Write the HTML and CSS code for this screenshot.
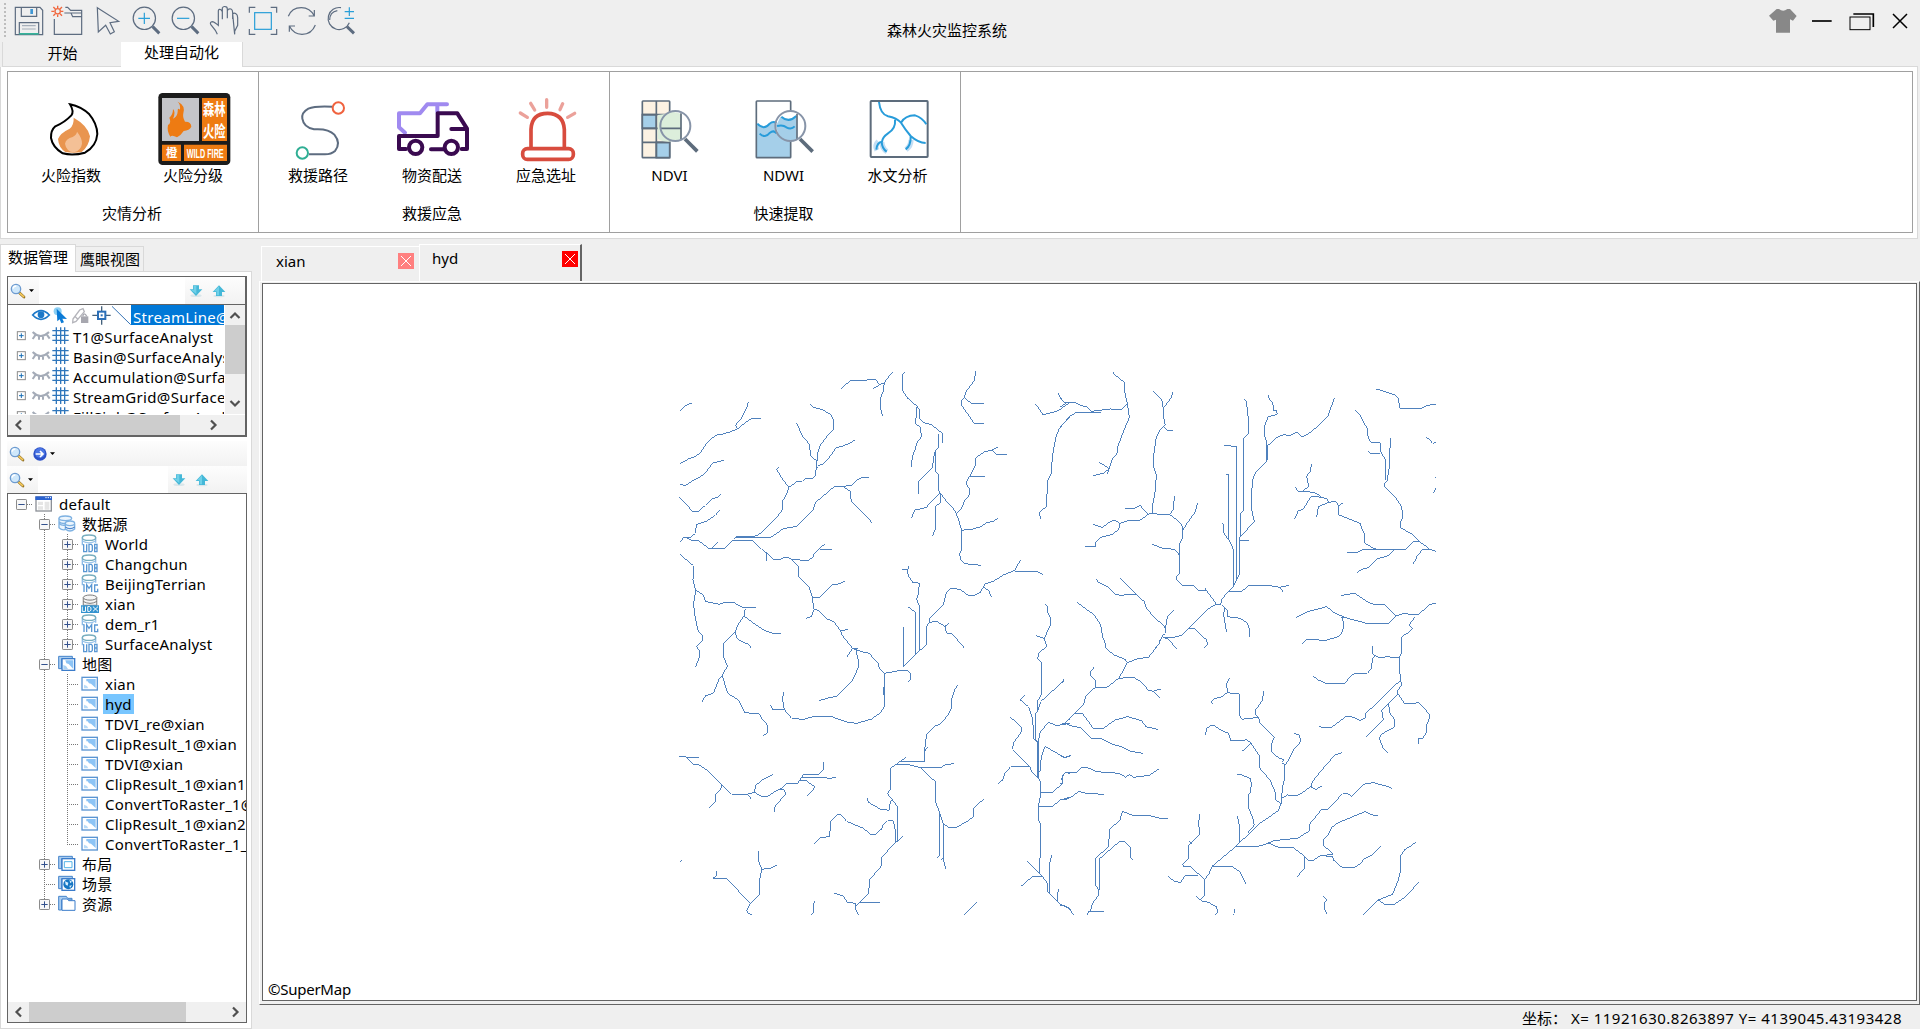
FILE: index.html
```html
<!DOCTYPE html>
<html lang="zh-CN">
<head>
<meta charset="utf-8">
<title>森林火灾监控系统</title>
<link rel="stylesheet" href="styles.css">
</head>
<body>
<svg class="defs" aria-hidden="true">
  <defs>
    <symbol id="search" viewBox="0 0 48 48"><path d="M28 29L42 42" stroke="#8a6a20" stroke-width="8" stroke-linecap="round"/><path d="M30 31L41 41" stroke="#f5c95c" stroke-width="5" stroke-linecap="round"/><circle cx="18" cy="18" r="14" fill="#cfe8fb" stroke="#6d9bd0" stroke-width="4"/><path d="M9 17a10 10 0 0 1 10-8" fill="none" stroke="#fff" stroke-width="4"/></symbol>
    <symbol id="down" viewBox="0 0 42 42"><ellipse cx="21" cy="35" rx="17" ry="4" fill="#d9e6ea"/><path d="M12 4H30V16H40L21 36L2 16H12Z" fill="#45b8d8"/><path d="M14 6H22V30L6 18H14Z" fill="#6fd0e8"/></symbol>
    <symbol id="up" viewBox="0 0 42 42"><ellipse cx="21" cy="36" rx="17" ry="4" fill="#d9e6ea"/><path d="M12 36H30V24H40L21 4L2 24H12Z" fill="#45b8d8"/><path d="M14 34H21V7L6 22H14Z" fill="#6fd0e8"/></symbol>
    <symbol id="caret" viewBox="0 0 15 9"><path d="M0 1H15L7.500 9Z" fill="#000"/></symbol>
    <symbol id="grid-layer" viewBox="45 255 165 60"><rect x="52" y="275" width="24" height="24" fill="#fff" stroke="#8d8d8d" stroke-width="3"/><path d="M57 287H71M64 280V294" stroke="#1b6fb5" stroke-width="3"/><path d="M98 276Q122 300 147 276M107 284L98 297M117 288V299M129 288V299M140 283L149 296" fill="none" stroke="#a5acb8" stroke-width="6"/><path d="M169 262V312M182 262V312M194 262V312M157 272H206M157 286H206M157 301H206" stroke="#2f76bb" stroke-width="4"/></symbol>
    <symbol id="plus" viewBox="0 0 33 33"><rect x="1.500" y="1.500" width="30" height="30" rx="2" fill="#f7f7f7" stroke="#8b8b8b" stroke-width="3"/><path d="M7 16.500H26M16.500 7V26" stroke="#32508c" stroke-width="3"/></symbol>
    <symbol id="minus" viewBox="0 0 33 33"><rect x="1.500" y="1.500" width="30" height="30" rx="2" fill="#f7f7f7" stroke="#8b8b8b" stroke-width="3"/><path d="M7 16.500H26" stroke="#32508c" stroke-width="3"/></symbol>
    <symbol id="workspace" viewBox="0 0 54 54"><rect x="3" y="6" width="46" height="42" fill="#fff" stroke="#8c9097" stroke-width="4"/><path d="M1 4H51V15H1Z" fill="#2b62d0"/><path d="M31 8H35M38 8H42M45 8H48" stroke="#fff" stroke-width="3"/><path d="M9 20H24V30H9ZM9 34H24V44H9ZM29 20H43V44H29Z" fill="#e5e5e5"/></symbol>
    <symbol id="sources" viewBox="0 0 54 54"><g fill="#eef6fd" stroke="#7fb2e2" stroke-width="4"><path d="M3 10V38Q14 49 26 42M3 10V20Q16 30 29 22M3 25Q12 34 24 30"/><ellipse cx="22" cy="10" rx="19" ry="7"/><path d="M22 27V42Q36 54 50 42V27"/><ellipse cx="36" cy="25" rx="14" ry="7"/><path d="M22 36Q36 46 50 36" stroke="#4f86cc"/></g></symbol>
    <symbol id="drum" viewBox="0 0 54 60"><path d="M4 10V32H9M44 10V26" fill="none" stroke="#8bbbe6" stroke-width="4"/><ellipse cx="24" cy="11" rx="20" ry="8" fill="#fff" stroke="#78aebf" stroke-width="4"/><path d="M4 21Q24 32 44 21" fill="none" stroke="#9ac4ea" stroke-width="4"/></symbol>
    <symbol id="udb" viewBox="0 0 54 60"><use href="#drum" width="54" height="60"/><path d="M8 31V53H17V31M24 31H31L34 35V49L31 53H24ZM41 31H48V53H41ZM41 42H48" fill="none" stroke="#5a97d3" stroke-width="4"/></symbol>
    <symbol id="img" viewBox="0 0 54 60"><use href="#drum" width="54" height="60"/><path d="M9 31V54M17 54V32L24 43L32 32V54M51 33H41V53H50V44" fill="none" stroke="#5a97d3" stroke-width="4"/></symbol>
    <symbol id="udx" viewBox="2 0 56 60"><g fill="#f5f5f5" stroke="#777" stroke-width="3"><path d="M9 10V34H51V10"/><ellipse cx="30" cy="10" rx="21" ry="8"/><path d="M9 22Q30 34 51 22" fill="none"/></g><rect y="34" width="60" height="24" fill="#3292cf"/><path d="M6 38V53H16V38M23 38H29L33 42V49L29 53H23ZM39 38L55 53M55 38L39 53" fill="none" stroke="#fff" stroke-width="3"/></symbol>
    <symbol id="map" viewBox="0 0 54 48"><rect x="3" y="4" width="46" height="38" fill="#fff" stroke="#5b95d2" stroke-width="4"/><path d="M16 9H44V36L30 23L24 22L20 16H16Z" fill="#8dc4f5"/><path d="M9 26L18 30L22 37H9Z" fill="#b8dbf8"/></symbol>
    <symbol id="stack" viewBox="0 0 54 54"><path d="M2 4H43V12H11V41H2Z" fill="#a9cdf1" stroke="#4584ca" stroke-width="3"/><rect x="12" y="11" width="38" height="35" fill="#fff" stroke="#3b7cca" stroke-width="4"/></symbol>
    <symbol id="maps" viewBox="0 0 54 54"><use href="#stack" width="54" height="54"/><path d="M22 16H46V42L32 27L25 25Z" fill="#8dc4f5"/><path d="M16 30L24 33L30 42H16Z" fill="#a9d2f5"/></symbol>
    <symbol id="layout" viewBox="0 0 54 54"><use href="#stack" width="54" height="54"/><path d="M19 20H42V38H19Z" fill="none" stroke="#53b4e8" stroke-width="3"/></symbol>
    <symbol id="scene" viewBox="0 0 54 54"><use href="#stack" width="54" height="54"/><circle cx="31" cy="28" r="15" fill="#1676c3"/><path d="M21 19L31 23L29 32L23 29ZM34 15L42 20L37 25ZM34 32L42 31L36 39Z" fill="#d8efff"/></symbol>
    <symbol id="folder" viewBox="0 0 54 54"><path d="M2 4H25L29 10H42V15H11V45H2Z" fill="#a9cdf1" stroke="#4584ca" stroke-width="3"/><path d="M12 12H28L32 17H51V46H12Z" fill="#fff" stroke="#3b7cca" stroke-width="3"/></symbol>
  </defs>
</svg>

<div class="window">
  <header class="titlebar">
    <div class="quick">
      <span class="grip"></span>
      <svg class="q" viewBox="36 9 117 99"><path d="M46 22H120L128 31V104H46ZM64 22V49H110V22M58 104V68H116V104" /><rect x="91" y="27" width="8" height="15" fill="#3f97d4" stroke="none"/><path d="M66 77H107M66 87H107" stroke="#a6afba"/><path d="M58 101.500H116" stroke="#36b39a" stroke-width="5"/></svg>
      <svg class="q" viewBox="153 9 117 99"><path d="M163 57V103H245V31H212L203 22H196M193 39H213L218 50H245M203 39H245"/><g stroke="#f0683f" stroke-width="4"><circle cx="173" cy="34" r="8"/><path d="M173 17V24M173 44V51M154 34H163M183 34H190M160 21L166 27M186 21L180 27M160 47L166 41M186 47L180 41"/></g></svg>
      <svg class="q" viewBox="270 9 117 99"><path d="M292 23L356 64L330 68L343 95L331 102L317 76L295 96Z"/></svg>
      <svg class="q" viewBox="387 9 117 99"><circle cx="433" cy="55" r="33.500"/><path class="cyan" d="M415 55H450M433 38V72"/><path d="M458 80L478 100" stroke-width="9"/></svg>
      <svg class="q" viewBox="504 9 117 99"><circle cx="550" cy="55" r="33.500"/><path class="cyan" d="M531 55H568"/><path d="M575 80L595 100" stroke-width="9"/></svg>
      <svg class="q" viewBox="621 9 117 99"><path d="M652 103L646 91L632 73Q629 66 637 65Q642 65 655 76V32Q657 26 663 29L667 35V57M667 58V24Q670 18 676 20Q682 20 682 28V55M682 32Q685 25 693 27Q698 29 698 38V57M698 42Q702 37 708 41Q713 44 713 53V76L704 94V103Z"/></svg>
      <svg class="q" viewBox="738 9 117 99"><path d="M748 38V22H766M812 22H830V38M748 87V103H766M812 103H830V87"/><rect class="cyan" x="764" y="38" width="50" height="50"/></svg>
      <svg class="q" viewBox="855 9 117 99"><path d="M865 49Q875 23 904 23Q930 23 943 48M943 30V48H926M946 75Q935 103 906 103Q880 102 868 78M868 95V78H885"/></svg>
      <svg class="q" viewBox="972 9 117 99"><path d="M1023 23A33 33 0 1 0 1048 68M1012 32Q989 36 989 60" /><path class="cyan" d="M1034 35H1062M1048 22V48M1034 55H1062"/><path d="M1041 80L1062 100" stroke-width="9"/></svg>
    </div>
    <h1>森林火灾监控系统</h1>
    <div class="controls">
      <svg class="shirt" viewBox="861 18 96 90"><path d="M890 27H897Q909 38 922 27H930L950 48L939 62L930 58V98H888V59L880 62L867 47Z" fill="#888"/></svg>
      <svg class="min" viewBox="990 18 72 90"><path d="M996 63H1055" stroke="#000" stroke-width="5"/></svg>
      <svg class="restore" viewBox="1101 18 90 90"><path d="M1120 42H1180V81" fill="none" stroke="#000" stroke-width="5"/><rect x="1110" y="51" width="60" height="38" fill="none" stroke="#000" stroke-width="3"/></svg>
      <svg class="close" viewBox="1230 18 60 90"><path d="M1239 42L1281 84M1281 42L1239 84" stroke="#000" stroke-width="4.500"/></svg>
    </div>
  </header>

  <nav class="ribbon-tabs"><span class="rtab">开始</span><span class="rtab active">处理自动化</span><span class="rest"></span></nav>
  <section class="ribbon">
    <div class="ribbon-inner">
      <div class="group g1">
        <div class="items">
          <div class="item"><svg viewBox="93 75 240 228"><path d="M210 115Q223 137 214 148Q194 169 166 181Q152 193 153 216Q158 244 188 262Q218 270 255 260Q289 241 292 204Q291 172 268 145Q244 122 210 115Z" fill="#fff" stroke="#000" stroke-width="6"/><path d="M221 155Q264 179 270 211Q267 241 245 258Q222 263 196 258Q176 245 174 219Q181 201 209 188Q222 178 221 155Z" fill="#e9954f"/><path d="M231 197Q247 217 246 233Q243 253 222 259Q199 257 195 233Q198 218 218 213Q231 205 231 197Z" fill="#f4c096"/></svg><span>火险指数</span></div>
          <div class="item"><svg viewBox="459 75 240 228"><rect x="475" y="81" width="216" height="216" rx="13" fill="#1c1c1c"/><path d="M486 96H597V225H486Z" fill="#c4c5c9"/><path d="M606 96H681V225H606ZM486 236H543V285H486ZM552 236H681V285H552Z" fill="#ee7b12"/><path d="M533 107Q557 118 550 142Q547 154 555 167Q573 166 574 182Q568 193 551 195Q542 209 531 214Q516 206 511 212Q500 195 504 177Q515 171 508 155Q519 146 519 129Q528 139 519 158Q532 152 533 137Q532 123 540 131Q542 115 533 107Z" fill="#ee7b12"/><g class="plate"><text x="0" y="0" font-size="35" transform="translate(609 148) scale(.97 1.4)">森林</text><text x="0" y="0" font-size="35" transform="translate(609 214) scale(.97 1.4)">火险</text><text x="498" y="274" font-size="34">橙</text><text x="0" y="0" font-size="34" transform="translate(560 276) scale(.64 1.16)" class="wild">WILD FIRE</text></g></svg><span>火险分级</span></div>
        </div>
        <div class="caption">灾情分析</div>
      </div>
      <div class="group g2">
        <div class="items">
          <div class="item"><svg viewBox="834 75 240 228"><path d="M998 122Q945 119 925 128Q904 140 907 158Q911 184 942 190Q985 187 1003 206Q1024 232 1005 255Q994 265 975 265H927" fill="none" stroke="#5d6c80" stroke-width="6"/><circle cx="1015" cy="126" r="17" fill="#fff" stroke="#f0623e" stroke-width="6"/><circle cx="907" cy="261" r="17" fill="#fff" stroke="#2fae94" stroke-width="6"/></svg><span>救援路径</span></div>
          <div class="item"><svg viewBox="1176 75 240 228"><g fill="none" stroke-width="12" stroke-linecap="round" stroke-linejoin="round"><path d="M1215 200L1197 184V142H1260L1282 115H1341M1312 115V138" stroke="#a08af0"/><path d="M1218 249H1197V210H1313V142H1372L1401 188V249H1385M1354 189H1400M1293 250H1330" stroke="#3a0a50"/><g stroke="#3a0a50" fill="#fff"><circle cx="1247" cy="244" r="20"/><circle cx="1354" cy="244" r="20"/></g></g></svg><span>物资配送</span></div>
          <div class="item"><svg viewBox="81 75 240 228"><g fill="none" stroke-linecap="round" stroke-linejoin="round"><path d="M203 101V124M155 112L167 132M251 113L243 131M124 141L145 154M287 142L266 154" stroke="#eba19a" stroke-width="10"/><path d="M156 248V190Q158 142 206 142Q253 143 256 190V248" stroke="#d84c3e" stroke-width="11"/><rect x="131" y="248" width="152" height="32" rx="14" fill="#fff" stroke="#d84c3e" stroke-width="11"/></g></svg><span>应急选址</span></div>
        </div>
        <div class="caption">救援应急</div>
      </div>
      <div class="group g3">
        <div class="items">
          <div class="item"><svg viewBox="449 75 240 228"><g stroke="#5d6c7c" stroke-width="5"><rect x="486" y="105" width="82" height="170" rx="2" fill="#fcf2e3"/><path d="M486 146H528V187H486ZM528 229H568V275H528Z" fill="#a5cfe9"/><path d="M528 105V275M486 146H568M486 187H568M486 229H568" fill="none"/></g><circle cx="585" cy="180" r="45" fill="#fff"/><path d="M532 147L555 144Q575 132 603 144V219Q560 236 532 219Z" fill="#dceedb"/><path d="M540 187H602M602 142V220" stroke="#5d6c7c" stroke-width="5"/><circle cx="585" cy="180" r="45" fill="none" stroke="#8794a8" stroke-width="6"/><path d="M614 219L651 256" stroke="#5d6c7c" stroke-width="11"/></svg><span>NDVI</span></div>
          <div class="item"><svg viewBox="791 75 240 228"><path d="M828 173Q850 191 865 173Q885 166 895 172H930V273H828Z" fill="#a5cfe9"/><rect x="828" y="105" width="103" height="170" rx="2" fill="none" stroke="#5d6c7c" stroke-width="5"/><circle cx="930" cy="180" r="45" fill="#fff"/><path d="M887 180L900 153Q925 170 949 153V219Q920 233 895 209Z" fill="#a5cfe9"/><path d="M831 173Q851 194 868 173Q878 164 888 171M838 203Q854 219 869 200Q880 191 889 202M903 152Q925 172 948 150M890 180Q908 175 918 184Q933 192 943 181" fill="none" stroke="#289cda" stroke-width="6"/><path d="M950 144V219" stroke="#5d6c7c" stroke-width="5"/><circle cx="930" cy="180" r="45" fill="none" stroke="#8794a8" stroke-width="6"/><path d="M959 219L997 257" stroke="#5d6c7c" stroke-width="11"/></svg><span>NDWI</span></div>
          <div class="item"><svg viewBox="1135 75 240 228"><rect x="1173" y="105" width="171" height="168" rx="2" fill="#fff" stroke="#5d6c7c" stroke-width="6"/><g fill="none"><path d="M1196 226Q1184 238 1192 253M1206 228Q1208 249 1222 257M1294 221Q1294 240 1279 251" stroke="#c3def4" stroke-width="16"/><path d="M1198 108Q1202 145 1225 151Q1251 156 1264 170Q1275 188 1293 210Q1315 230 1338 231M1246 161Q1249 188 1225 202Q1209 213 1207 227Q1192 228 1190 251M1206 227Q1207 248 1221 257M1264 170Q1276 149 1306 148Q1328 155 1340 175M1293 210Q1294 239 1278 250" stroke="#289cda" stroke-width="6"/></g></svg><span>水文分析</span></div>
        </div>
        <div class="caption">快速提取</div>
      </div>
    </div>
  </section>

  <main class="body">
    <aside class="side">
      <div class="side-tabs"><span class="stab active">数据管理</span><span class="stab">鹰眼视图</span><span class="rest"></span></div>
      <div class="side-page">
        <div class="layers">
          <div class="finder"><svg class="s16"><use href="#search"/></svg><svg class="caret"><use href="#caret"/></svg><span class="field"></span><svg class="s14"><use href="#down"/></svg><svg class="s14"><use href="#up"/></svg></div>
          <div class="layer-view">
            <div class="layer-rows">
              <div class="lrow first"><svg class="line-tools" viewBox="93 195 300 60"><path d="M98 225Q123 199 148 225Q123 251 98 225Z" fill="#fff" stroke="#1b78c8" stroke-width="5"/><circle cx="123" cy="224" r="10" fill="#1b78c8"/><circle cx="173" cy="214" r="12" fill="#8dd0f4"/><path d="M170 206L201 237L187 236L192 247L184 250L179 238L172 244Z" fill="#0b7bd6"/><path d="M219 237L239 210L249 206L253 215L228 244L218 248ZM226 230L235 239" fill="none" stroke="#b5b5bb" stroke-width="4"/><rect x="243" y="229" width="22" height="20" fill="#a7a7af"/><path d="M248 229Q253 214 260 229M254 235V243" fill="none" stroke="#a7a7af" stroke-width="4"/><path d="M277 226H332M305 199V254" stroke="#44617c" stroke-width="4"/><rect x="294" y="215" width="22" height="22" fill="#fff" stroke="#2b6fb8" stroke-width="6"/><rect x="302" y="223" width="6" height="6" fill="#2b6fb8"/><path d="M336 199L392 254" stroke="#3573b5" stroke-width="3"/></svg><span class="sel">StreamLine@SurfaceAnalyst</span></div>
              <div class="lrow"><svg class="lico"><use href="#grid-layer"/></svg><span>T1@SurfaceAnalyst</span></div>
              <div class="lrow"><svg class="lico"><use href="#grid-layer"/></svg><span>Basin@SurfaceAnalyst</span></div>
              <div class="lrow"><svg class="lico"><use href="#grid-layer"/></svg><span>Accumulation@SurfaceAnalyst</span></div>
              <div class="lrow"><svg class="lico"><use href="#grid-layer"/></svg><span>StreamGrid@SurfaceAnalyst</span></div>
              <div class="lrow"><svg class="lico"><use href="#grid-layer"/></svg><span>FillSink@SurfaceAnalyst</span></div>
            </div>
            <div class="vbar"><svg viewBox="0 0 20 20"><path d="M5.500 13L10 8.500L14.500 13"/></svg><span class="thumb"></span><span class="grow"></span><svg viewBox="0 0 20 20"><path d="M5.500 7L10 11.500L14.500 7"/></svg></div>
          </div>
          <div class="hbar top-h"><svg viewBox="0 0 20 20"><path d="M13 5.500L8.500 10L13 14.500"/></svg><span class="thumb"></span><span class="grow"></span><svg viewBox="0 0 20 20"><path d="M8 5.500L12.500 10L8 14.500"/></svg></div>
        </div>
        <div class="strip"><svg class="s16"><use href="#search"/></svg><svg class="go" viewBox="0 0 42 42"><circle cx="21" cy="21" r="20" fill="#2c51c8"/><circle cx="21" cy="18" r="15" fill="#4c76e4"/><path d="M8 21H29M21 12L30 21L21 30" fill="none" stroke="#fff" stroke-width="5"/></svg><svg class="caret"><use href="#caret"/></svg></div>
        <div class="finder second"><svg class="s16"><use href="#search"/></svg><svg class="caret"><use href="#caret"/></svg><span class="field"></span><svg class="s14"><use href="#down"/></svg><svg class="s14"><use href="#up"/></svg></div>
        <div class="tree">
          <div class="tree-rows">
            <div class="trow"><i class="c h"><svg><use href="#minus"/></svg></i><svg class="ti"><use href="#workspace"/></svg><span>default</span></div>
            <div class="trow"><i class="c"></i><i class="c t"><svg><use href="#minus"/></svg></i><svg class="ti"><use href="#sources"/></svg><span>数据源</span></div>
            <div class="trow"><i class="c"></i><i class="c v"></i><i class="c t"><svg><use href="#plus"/></svg></i><svg class="ti"><use href="#udb"/></svg><span>World</span></div>
            <div class="trow"><i class="c"></i><i class="c v"></i><i class="c t"><svg><use href="#plus"/></svg></i><svg class="ti"><use href="#udb"/></svg><span>Changchun</span></div>
            <div class="trow"><i class="c"></i><i class="c v"></i><i class="c t"><svg><use href="#plus"/></svg></i><svg class="ti"><use href="#img"/></svg><span>BeijingTerrian</span></div>
            <div class="trow"><i class="c"></i><i class="c v"></i><i class="c t"><svg><use href="#plus"/></svg></i><svg class="ti"><use href="#udx"/></svg><span>xian</span></div>
            <div class="trow"><i class="c"></i><i class="c v"></i><i class="c t"><svg><use href="#plus"/></svg></i><svg class="ti"><use href="#img"/></svg><span>dem_r1</span></div>
            <div class="trow"><i class="c"></i><i class="c v"></i><i class="c l"><svg><use href="#plus"/></svg></i><svg class="ti"><use href="#udb"/></svg><span>SurfaceAnalyst</span></div>
            <div class="trow"><i class="c"></i><i class="c t"><svg><use href="#minus"/></svg></i><svg class="ti"><use href="#maps"/></svg><span>地图</span></div>
            <div class="trow"><i class="c"></i><i class="c v"></i><i class="c t"></i><svg class="ti"><use href="#map"/></svg><span>xian</span></div>
            <div class="trow"><i class="c"></i><i class="c v"></i><i class="c t"></i><svg class="ti"><use href="#map"/></svg><span class="picked">hyd</span></div>
            <div class="trow"><i class="c"></i><i class="c v"></i><i class="c t"></i><svg class="ti"><use href="#map"/></svg><span>TDVI_re@xian</span></div>
            <div class="trow"><i class="c"></i><i class="c v"></i><i class="c t"></i><svg class="ti"><use href="#map"/></svg><span>ClipResult_1@xian</span></div>
            <div class="trow"><i class="c"></i><i class="c v"></i><i class="c t"></i><svg class="ti"><use href="#map"/></svg><span>TDVI@xian</span></div>
            <div class="trow"><i class="c"></i><i class="c v"></i><i class="c t"></i><svg class="ti"><use href="#map"/></svg><span>ClipResult_1@xian1</span></div>
            <div class="trow"><i class="c"></i><i class="c v"></i><i class="c t"></i><svg class="ti"><use href="#map"/></svg><span>ConvertToRaster_1@xian</span></div>
            <div class="trow"><i class="c"></i><i class="c v"></i><i class="c t"></i><svg class="ti"><use href="#map"/></svg><span>ClipResult_1@xian2</span></div>
            <div class="trow"><i class="c"></i><i class="c v"></i><i class="c l"></i><svg class="ti"><use href="#map"/></svg><span>ConvertToRaster_1_1@xian</span></div>
            <div class="trow"><i class="c"></i><i class="c t"><svg><use href="#plus"/></svg></i><svg class="ti"><use href="#layout"/></svg><span>布局</span></div>
            <div class="trow"><i class="c"></i><i class="c t"></i><svg class="ti"><use href="#scene"/></svg><span>场景</span></div>
            <div class="trow"><i class="c"></i><i class="c l"><svg><use href="#plus"/></svg></i><svg class="ti"><use href="#folder"/></svg><span>资源</span></div>
          </div>
          <div class="hbar tree-h"><svg viewBox="0 0 20 20"><path d="M13 5.500L8.500 10L13 14.500"/></svg><span class="thumb"></span><span class="grow"></span><svg viewBox="0 0 20 20"><path d="M8 5.500L12.500 10L8 14.500"/></svg></div>
        </div>
      </div>
    </aside>

    <section class="work">
      <div class="doc-tabs">
        <div class="dtab"><span>xian</span><svg class="x" viewBox="0 0 16 16"><path d="M3 3L13 13M13 3L3 13"/></svg></div>
        <div class="dtab active"><span>hyd</span><svg class="x" viewBox="0 0 16 16"><path d="M3 3L13 13M13 3L3 13"/></svg></div>
      </div>
      <div class="frame">
        <div class="map">
          <svg class="streams" viewBox="263 284 1652 716">
            <g transform="translate(670 360) scale(.33333)">
              <path d="M31 152L45 138 65 129M235 127L229 146 215 174 197 195 202 206M272 175L247 175 225 188 208 204 185 214 160 222 142 224 122 237 103 259 91 279 76 289 55 297 31 311M163 301L128 309 106 339 85 354 70 361 48 376 31 374M155 401L145 411 124 418 106 436 85 454 67 454 55 440 28 412M149 451L136 466 109 484 79 494 76 520 64 531 40 533 31 546M49 532L61 540 85 542 100 552 115 565 163 566 189 541 248 541 275 568 290 579 310 598 335 597 340 592 355 593 365 599 416 601 430 590 433 580 448 567 485 568M450 565L464 552M290 577L288 604M125 565L143 547"/>
              <path d="M190 538L199 529 258 528 275 517 325 466 337 450 338 423 350 401 357 382 379 366 397 364 404 357 428 356 436 347 436 333 443 320M357 382L340 361 330 345 320 329 326 322M199 532H302L325 517 340 506 380 499 404 476 430 448 437 427 494 379 518 379 545 376 562 360 577 352 596 352M518 379L540 393 544 424 580 460 608 490M421 133L430 142 455 148 482 163 491 180 491 207 470 230 452 254 443 278 441 304M379 189L386 200 388 210 398 230 418 252 422 287 441 304V325M443 317L460 312 482 287 497 264 520 258 539 249 554 241"/>
              <path d="M513 86L541 62 582 61 617 57 628 75 610 86M628 75L643 68 658 48 671 35M643 68L640 93 633 110 633 150 638 169M704 36L698 45V93L712 114 740 138 748 148 749 175 760 187 785 195 812 216 817 219V250M740 140L737 192 750 200 755 230 742 245 735 270 727 290 724 320M806 222L805 262 796 273V333L806 345V393L812 400 830 425 850 445 859 461 868 487 875 511M794 275L787 322 745 364V403M809 399L768 443 735 450 724 474M812 400L811 428 796 440V508L787 529"/>
              <path d="M917 34L913 62 886 98 884 113 873 124 874 135 900 172 914 192 941 191M884 113L902 129 941 132M983 262L967 270 945 275 918 293 915 318 905 338 898 350 890 365 891 375 898 387 897 406 884 422 875 445 859 461M967 270L980 284 1010 283M900 349H944M875 511L909 507 930 501 950 488 970 484 983 475M875 511L875 570 869 582 873 600 885 611 932 616M1097 133L1110 150 1119 165 1165 152 1184 138 1200 127M1165 99L1168 110 1184 127 1200 127M1200 171L1168 205 1158 230 1152 262 1147 290 1144 340 1133 362 1129 440 1110 455 1108 465 1114 478"/>
              <path d="M31 583L55 605 70 617 69 660 77 692 71 730 73 760 85 815 97 826 97 841 80 860 88 872 88 890 77 922M79 692L100 705 106 724 148 733 160 728 190 727 222 744H257M226 746L222 768 205 793 195 816 160 850M222 768L260 796 285 812 310 820 332 821M195 816L203 838 235 853 245 865M365 599L386 620V650L418 683 427 712H449L485 675 505 672 524 664M427 712L431 748 445 751 470 777 490 784 512 812 516 825 548 865M431 751L425 769 409 775M512 812L533 809"/>
              <path d="M697 628H715V619M712 628L715 648 727 666 748 670 745 700 740 718 748 738V873M715 741L737 757V884M700 801V920M1052 599L1034 631 1000 645 970 664 945 672 940 682 930 698 912 706 895 706 870 688 842 685 830 696 820 733 778 775 778 787 770 798V853L748 873 700 920M1034 635L1100 634 1118 643M940 682L955 690 965 712M778 787L800 784 825 799 838 788M825 799L830 820 847 822 884 865M1127 733L1132 740 1133 757 1143 775 1140 798 1123 835 1130 858M1123 835L1097 827"/>
            </g>
            <g transform="translate(1060 360) scale(.33333)">
              <path d="M157 35L165 45 193 67 194 95 202 130 208 172 186 225 173 262 174 277 157 297 148 325 142 343M118 307L148 326 130 340 100 347M0 115L12 127H46L63 137 80 140 95 154 150 147 185 148 202 132M0 142L18 130M0 202L30 168 50 157H122M280 94L305 118 310 145M338 97L334 112 310 145V170L316 195 301 208 289 232 281 285 282 325 289 345 286 390 279 430 278 460M312 202L325 212H338"/>
              <path d="M195 445H222L240 436 265 463 278 459 305 465 328 463 340 450 343 409M328 463L355 483 368 500V535L358 552V640L350 650V660L368 676H400L418 693H440L467 728V733H482L485 718 505 694 521 678V570L505 535V343H499M265 463L240 481 205 482 180 490 165 481 152 484 127 502 100 493M180 490L176 508 158 523 120 533 108 545 107 560 75 559M413 428L405 457 381 490 368 512M275 553L310 565 343 568 358 585M437 683V693M489 490L491 517 504 538"/>
              <path d="M493 256L522 259H529V660M553 118L559 125 565 177V220L550 237V452L541 462V525L538 545V642L521 678M541 530L583 485 574 445V400L580 350 590 333 620 303V245L613 227V200L625 170 652 163 650 153 642 152 638 130 627 115V105M622 300V258L650 233 670 224 690 227 710 217 728 231 755 215 803 170 823 115M541 541H566M505 694H545L568 676H625L660 682 686 676M660 682L670 696M467 733L440 750 387 803 363 827 330 834H316M387 805H402L440 840 442 853 433 865M494 740L491 765 500 817M488 736L502 752V770L540 775 560 787 568 805V832"/>
              <path d="M109 658L115 667 145 682 165 702 190 708 195 703H228M181 655L228 703 252 724 260 745 285 775 310 795 316 806V820L305 830 298 850 283 868M340 751L322 770 316 806M305 830L325 838 350 866M52 727L75 745 103 765 122 795 128 830 136 850 137 862 143 868M949 87L975 95 1005 105 1015 115 1019 145H1085L1100 136 1128 133M886 152L900 165 921 205 925 235 935 249 961 248V274L977 300V360M925 275L932 281 961 280M991 235L988 320 981 362 973 370 975 380 1005 410 1025 440 1028 470 1021 490 1022 503 1055 522 1078 545 1100 560 1108 568M1097 232L1108 238 1118 250 1128 247M1126 352H1129M1128 385L1120 398"/>
              <path d="M755 313L750 335 740 348 746 378 730 393M706 382L715 394H740L770 400 785 412 803 418 805 428 825 423 835 435 837 465 870 478 900 490 905 505 913 520V548L940 565 950 568H1037L1060 545H1078M785 412L755 408 740 430 730 448 715 452 703 478M805 428L775 440 770 472M850 428L837 437M862 577H893L910 568H950M1003 570L985 587 950 597 925 623 905 628 892 637M1128 575L1115 569H1087L1070 590 1066 603 1058 612M844 706L885 700 925 727 940 733 973 734 1008 768 987 790H920L862 775 825 760 800 740 740 756 709 772M1008 768L1030 761 1075 764 1110 733 1128 730M845 772L851 790 848 815 835 830 797 841 740 838 727 851M845 772H862M1066 770L1047 795 1057 805 1045 818 1025 830V870"/>
            </g>
            <g transform="translate(670 640) scale(.33333)">
              <path d="M548 25L575 35 597 40 625 70 628 85 643 100 693 91M548 25H565M548 25L530 52M557 27L565 60 564 85 548 120 502 168 470 175 448 182M693 91L712 91 721 100 720 120 715 125M643 100V200L632 218 605 237 560 250 530 246 485 230 430 230 400 238 365 235 343 209H308L301 194M343 209L338 180 340 156M640 140V164M161 10V50L172 78 157 107 147 118 130 160 106 168 97 185M157 107L173 160 205 180 225 218 268 222 275 235 293 256 291 280 280 286"/>
              <path d="M863 136L855 147 844 180 843 208 832 228 810 253 795 258 770 282 765 320 764 364H691L662 385V445L653 462 683 500V603M775 320L765 332M707 352L691 365M680 374H715L752 383H815L825 374 853 371M752 384L797 426 798 490 809 518V647L802 653M797 450V485M809 520L820 552V658L827 686M820 550L835 562H858L895 543 911 528V504L925 490 943 478M820 655L813 658M668 478L661 485 657 511 630 507 595 487 592 475M431 613L450 593 479 590 482 543 502 523 511 523 530 544 580 565 602 583H616L635 567 638 557 653 542H670L677 575V608M698 590L677 608 636 650 634 678 600 718 595 762 557 798 558 810 566 824M493 760L520 768 532 787 557 790V798M568 787H630M883 824L920 787M31 664L35 661"/>
              <path d="M128 716L138 708 139 694M128 716H170L241 790 269 762V718L275 688 265 660V634M275 688L300 685 320 676M241 790L230 812 234 820 245 824M433 782L430 800 431 818 424 824M28 349H45L70 372 87 375 115 393 185 463H232L245 478M48 352H88M155 434L152 448 137 464 136 485 118 502M232 463L253 457 275 469H292L315 455 335 445 350 431H382L400 404H445L460 390V366M253 457L258 435 280 418 308 404M397 413H470L477 417 497 411M388 421H407L434 440 430 448 412 467M330 448L343 450 347 462 313 502 315 517"/>
              <path d="M1130 18L1105 42 1103 58 1114 65V165L1103 182V212L1097 220V300L1103 306V414M1180 120L1175 128 1112 185 1103 212M1063 166L1051 180 1075 200 1088 235 1091 297 1103 306M1019 229L1054 262 1053 277 1030 310 1028 328 1080 380 1085 395 1104 414 1112 425V465L1106 495V543L1111 550V610L1109 700 1118 710 1132 730 1134 755 1170 792 1200 805M1078 380H1022L1005 400 998 420 985 431M1106 414V310L1108 280 1135 247 1160 257 1200 250M1183 250L1200 236M1110 395L1114 350 1125 320 1150 333 1180 352 1200 350M1112 457H1148L1178 430 1175 415 1185 398 1200 400M1106 499H1148L1170 480 1200 472M1073 664L1109 700M1118 709H1088L1052 740M1145 645L1139 670V763M1167 748L1163 760V787"/>
            </g>
            <g transform="translate(1060 640) scale(.33333)">
              <path d="M136 15V22L160 44 195 58 202 68 185 100 176 115 150 135 140 142H106L78 167 70 195 15 250M298 0V10L265 53 235 55 202 68M106 142L105 120 91 107 93 93 104 80M176 115L220 112 240 123 265 150 280 154 298 173M280 154L302 147M44 220H67L100 265H130L165 240 203 230 245 242 258 260 293 268M0 253L15 250 40 260 60 262 95 295 125 296 155 312 185 320 210 333 248 340M0 130L10 125V118M0 345L15 352 32 347M0 430H6L8 405 15 398 50 397 65 382H80L110 395 178 400 198 412 208 403 220 412 268 406 298 386M0 478H18L40 468 55 454 80 460 131 463"/>
              <path d="M508 115L500 130 502 158 485 170 460 178 455 185 458 193M502 158L538 162V225L545 238 595 232M610 154L608 180 588 208 587 225 595 232 600 248 643 292 635 310V335L655 353 673 360 665 367 675 376 675 410 667 445 664 490M703 280L718 285 722 305 700 330 690 352 675 376M436 286L440 265 452 257 466 258 475 266 505 280 513 303H545L560 298 573 310 597 345 600 385 630 420 647 460 648 480 663 492 655 512 600 550 540 607 527 620 455 680 448 700 433 719V767L421 780M573 310L545 335M845 338L825 345 798 375 765 415 753 433 755 443 768 448 785 439M753 438L735 453 712 467 682 465 665 475 664 492M532 403L545 405 570 415 574 428 572 455 566 465V505L577 530 583 555 562 580M532 528L538 555V606"/>
              <path d="M527 619H595L625 610 640 602 712 595 750 572 747 555 785 508H803L848 461 862 461 875 469 910 433 940 428 985 440 995 445M625 608L655 622 700 623 733 648 745 661 762 660 780 647 820 643M733 648V685L712 710M953 526L940 526 915 515 835 548 815 562 805 585 791 597V617L818 640M797 650H818L820 660 848 684 885 682 905 668 910 658 935 645 962 620M455 679H515L540 695 557 731M324 709L345 725 362 727 375 707H415M433 719L393 680 370 679 368 673 385 655 387 615 420 583 416 555 418 523M387 603L395 611M409 769L425 783 445 787 470 801 473 815 466 824M523 808V820L519 824"/>
              <path d="M323 535H300L270 527 215 525 187 514 180 540 150 567 145 620 107 655V735L116 750V765L98 790 91 813M119 655V750M120 655L178 605H195L211 622 212 653 218 659M82 824L87 814H133M0 796L12 798 30 808 40 824M790 769L802 780 795 785V810L802 823M910 824L955 780 998 763 1015 720 1023 685 1021 648 1035 628 1050 620 1067 607M955 780L975 793 1005 792 1030 775 1045 762 1075 727M760 109L775 120 800 131 853 132 870 110 885 100 922 100 935 85 937 55 945 47 938 42V18M945 47L960 54 980 50 1018 54 1025 38V0M1018 54V85L1022 120 918 220 915 235 900 241 875 230H857L815 262 800 264 778 260M1022 120L1025 135 1014 150V162L965 212 970 238 917 292M985 190L990 220 1003 238V262L965 282 958 295 970 325 985 340M1014 162L1035 192 1055 192 1075 187 1108 222V235L1100 255 1098 280 1088 295 1075 297V311"/>
            </g>
          </svg>
          <span class="credit">©SuperMap</span>
        </div>
      </div>
      <footer class="status"><span>坐标：</span><span class="xy">X= 11921630.8263897 Y= 4139045.43193428</span></footer>
    </section>
  </main>
</div>
</body>
</html>
```
FILE: styles.css
```css
* { box-sizing: border-box; }
body { margin: 0; background: #efefef; color: #000; font: 15px/20px "Noto Sans", "Noto Sans CJK SC", sans-serif; }
svg { display: block; flex: none; }
.defs { position: absolute; width: 0; height: 0; }
.window { width: 1920px; height: 1029px; display: flex; flex-direction: column; overflow: hidden; }

/* title bar */
.titlebar { height: 42px; display: grid; grid-template-columns: 360px 1174px 1fr; }
.quick { display: flex; align-items: flex-start; padding-top: 3px; }
.grip { width: 2px; height: 36px; flex: none; margin: 0 6px 0 4px; background: repeating-linear-gradient(#bdbdbd 0 2px, transparent 2px 4px); }
.q { width: 39px; height: 33px; fill: none; stroke: #5d6c80; stroke-width: 3.6; }
.cyan { stroke: #2a9fd8; }
h1 { margin: 20px 0 0; font-size: 15px; line-height: 20px; font-weight: 400; text-align: center; }
.controls { display: flex; justify-content: flex-end; padding: 6px 10px 0 0; }
.controls svg { height: 30px; }
.shirt { width: 32px; }
.min { width: 24px; margin-left: 11px; }
.restore { width: 30px; margin-left: 13px; }
.close { width: 20px; margin-left: 13px; }

/* ribbon */
.ribbon-tabs { display: flex; height: 25px; width: 1918px; flex: none; }
.rtab { width: 121px; padding: 1px 4px 0 0; text-align: center; border-bottom: 1px solid #d9d9d9; border-left: 1px solid #d9d9d9; text-indent: 3px; margin-left: 2px; }
.rtab.active { width: 121px; margin-left: -2px; padding: 0; line-height: 20px; background: #fff; border-bottom-color: #fff; border-left-color: #fff; text-indent: -1px; }
.rest { flex: 1; border-bottom: 1px solid #d9d9d9; }
.ribbon-tabs .rest { border-left: 1px solid #d9d9d9; }
.ribbon { height: 172px; flex: none; width: 1918px; padding: 4px 4px 5px 6px; background: #fff; border: 1px solid #d9d9d9; border-top: 0; }
.ribbon-inner { height: 162px; display: flex; border: 1px solid #a0a0a0; }
.group { border-right: 1px solid #a0a0a0; padding-top: 19px; }
.g1 { width: 251px; }
.g2, .g3 { width: 351px; }
.items { display: flex; justify-content: center; }
.item { width: 114px; display: flex; flex-direction: column; align-items: center; }
.g1 .item { width: 122px; }
.g1 .items, .g1 .caption { padding-right: 2px; }
.g2 .items { padding-right: 4px; }
.g3 .items, .g3 .caption { padding-right: 3px; }
.item svg { width: 80px; height: 76px; }
.item span { line-height: 18px; margin: -1px 0 1px; }
.caption { margin-top: 18px; text-align: center; }
.g2 .caption { padding-right: 4px; }
.plate { fill: #fff; font-family: "Noto Sans CJK SC", sans-serif; font-weight: 700; }
.wild { font-family: "Liberation Sans", sans-serif; }

/* body */
.body { flex: 1; display: flex; min-height: 0; padding-top: 5px; }
.side { width: 252px; display: flex; flex-direction: column; }
.side-tabs { height: 28px; display: flex; align-items: stretch; }
.stab { width: 68px; margin-top: 2px; padding: 2px 0 0 4px; border: 1px solid #d9d9d9; border-left: 0; background: #f0f0f0; white-space: nowrap; }
.stab.active { width: 76px; margin: 0; padding: 2px 0 0 7px; border: 1px solid #d9d9d9; border-bottom: 0; background: #fff; }
.side-page { flex: 1; padding: 4px 4px 6px 6px; background: #fff; border: 1px solid #d9d9d9; border-top: 0; display: flex; flex-direction: column; min-height: 0; }
.layers { height: 161px; border: 1px solid #646464; border-right-width: 2px; border-bottom-width: 2px; width: 240px; flex: none; }
.finder { height: 28px; padding-left: 2px; display: flex; align-items: center; background: linear-gradient(#fdfdfd, #f2f2f2); border-bottom: 1px solid #646464; }
.s16 { width: 16px; height: 16px; }
.s14 { width: 14px; height: 14px; }
.caret { width: 5px; height: 3px; margin-left: 3px; }
.field { width: 146px; height: 27px; margin: 0 4px 0 5px; background: #fff; }
.s14 + .s14 { margin-left: 9px; }
.layer-view { height: 110px; display: flex; }
.layer-rows { width: 216px; height: 109px; overflow: hidden; }
.lrow { height: 20px; display: flex; white-space: nowrap; padding-left: 7px; }
.lrow.first { padding-left: 23px; }
.line-tools { width: 100px; height: 20px; }
.lico { width: 55px; height: 20px; }
.lrow span { padding: 2px 0 0 3px; letter-spacing: .32px; }
.lrow .sel { height: 20px; padding-left: 2px; background: #0078d7; color: #fff; line-height: 21px; }
.vbar { width: 20px; height: 109px; margin-left: 1px; background: #f0f0f0; display: flex; flex-direction: column; }
.vbar svg, .hbar svg { width: 20px; height: 20px; fill: none; stroke: #505050; stroke-width: 2.2; }
.vbar .thumb { height: 49px; background: #cdcdcd; }
.grow { flex: 1; }
.hbar { height: 20px; display: flex; background: #f0f0f0; }
.hbar .thumb { background: #cdcdcd; }
.top-h .thumb { width: 150px; margin-left: 2px; }
.top-h svg:last-child { margin-right: 22px; }
.tree-h .thumb { width: 157px; margin-left: 1px; }
.tree-h svg:last-child { margin-right: 1px; }
.strip { height: 25px; margin-top: 4px; padding-left: 2px; display: flex; align-items: center; background: linear-gradient(#fdfdfd, #f2f2f2); flex: none; }
.go { width: 14px; height: 14px; margin-left: 8px; }
.finder.second { height: 27px; border-bottom: 0; flex: none; }
.finder.second .field { width: 130px; margin-left: 5px; }
.tree { height: 530px; width: 240px; margin-top: 0; border: 1px solid #646464; flex: none; display: flex; flex-direction: column; }
.tree-rows { height: 508px; padding: 0 0 0 2px; overflow: hidden; }
.trow { height: 20px; display: flex; align-items: center; white-space: nowrap; letter-spacing: .22px; }
.c { width: 23px; height: 20px; flex: none; display: flex; align-items: center; justify-content: center; --v: repeating-linear-gradient(#777 0 1px, transparent 1px 2px); --h: repeating-linear-gradient(90deg, #777 0 1px, transparent 1px 2px); background-repeat: no-repeat; }
.c svg { width: 11px; height: 11px; }
.v { background-image: var(--v); background-size: 1px 20px; background-position: 11px 0; }
.t { background-image: var(--v), var(--h); background-size: 1px 20px, 12px 1px; background-position: 11px 0, 11px 10px; }
.l { background-image: var(--v), var(--h); background-size: 1px 10px, 12px 1px; background-position: 11px 0, 11px 10px; }
.h { background-image: var(--h); background-size: 12px 1px; background-position: 11px 10px; }
.ti { width: 18px; height: 20px; margin: 0 4px 0 2px; }
.trow span { padding: 0 2px; }
.trow .picked { background: #78c6ff; }

/* document area */
.work { flex: 1; display: flex; flex-direction: column; padding: 0 0 0 7px; min-width: 0; }
.doc-tabs { height: 37px; display: flex; align-items: flex-end; padding-left: 2px; }
.dtab { display: flex; justify-content: space-between; align-items: flex-start; width: 158px; height: 35px; padding: 4px 5px 0 14px; border-left: 1px solid #fff; border-top: 1px solid #fff; }
.dtab.active { width: 163px; height: 37px; padding: 3px 2px 0 12px; border-right: 2px solid #646464; }
.x { width: 16px; height: 16px; margin-top: 2px; background: #ff8080; stroke: #fff; }
.active .x { margin-top: 3px; background: #f00; }
.frame { height: 724px; flex: none; padding: 1px 2px 3px 2px; border: 1px solid #fff; border-right: 1px solid #646464; border-bottom: 1px solid #646464; }
.map { position: relative; height: 100%; background: #fff; border: 1px solid #646464; }
.streams { width: 1652px; height: 716px; fill: none; stroke: #4f81bd; stroke-width: 3; shape-rendering: crispEdges; }
.credit { position: absolute; left: 5px; bottom: 1px; letter-spacing: -.25px; }
.status { flex: 1; display: flex; justify-content: flex-end; align-items: flex-start; padding: 3px 18px 0 0; }
.xy { margin-left: 4px; letter-spacing: .5px; }
```
